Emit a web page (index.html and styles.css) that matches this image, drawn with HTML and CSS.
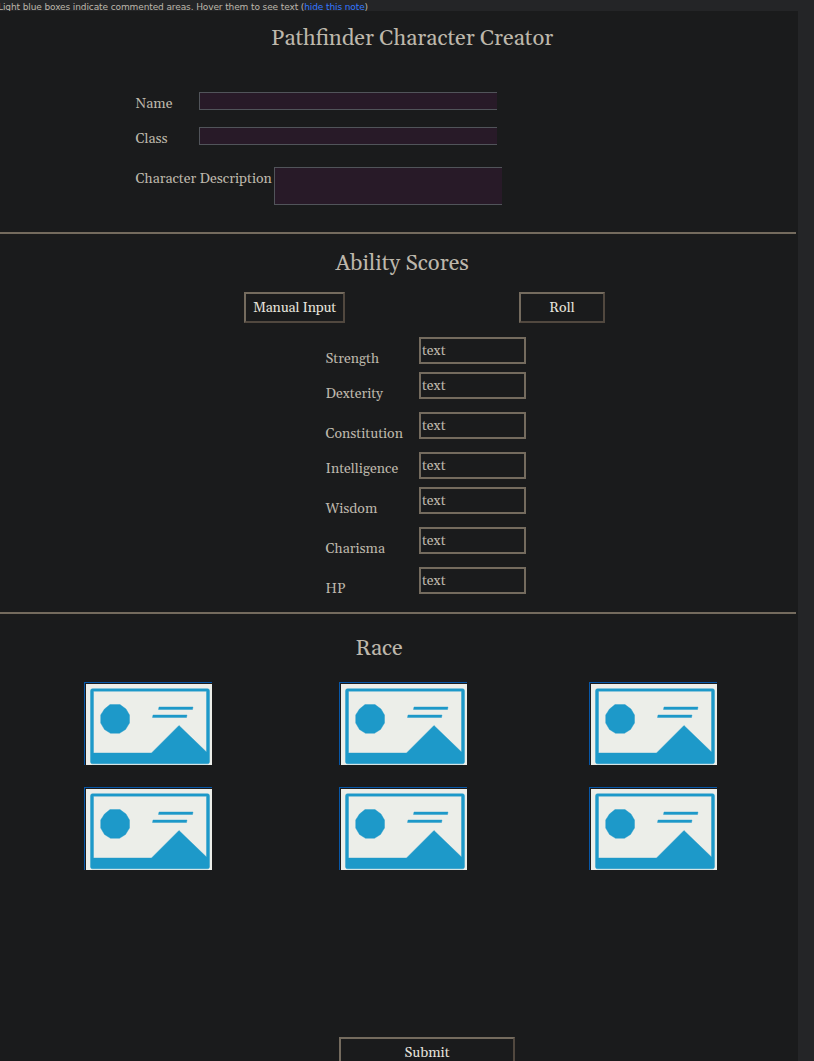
FILE: index.html
```
<!DOCTYPE html>
<html lang="en">
<head>
<meta charset="utf-8">
<title>Pathfinder Character Creator</title>
<link rel="stylesheet" href="styles.css">
</head>
<body>
<svg class="defs" aria-hidden="true">
  <symbol id="picture" viewBox="0 0 126 81">
    <g fill="#1d99c9" stroke="#1d99c9" stroke-opacity=".4" stroke-width="1">
      <path fill-rule="evenodd" d="M6.500 4.700H121.500Q123.500 4.700 123.500 6.700V78Q123.500 79.800 121.500 79.800H6.500Q4.500 79.800 4.500 78V6.700Q4.500 4.700 6.500 4.700ZM7.500 7.200V69H65.500L93 41.500L120.500 68V7.200Z"/>
      <path d="M24 20.600H34L40 25L43.500 31V39L39.500 45.500L33.500 49.300H24.500L18.500 45.500L14.700 39V31L18.500 25Z"/>
      <path d="M73 23H107L106.500 25.500H72.500ZM67 31H101L100.500 33.500H66.500Z"/>
    </g>
  </symbol>
</svg>
<div class="note"><p>Light blue boxes indicate commented areas. Hover them to see text (<a href="#">hide this note</a>)</p></div>
<main class="page">
  <section class="identity">
    <h1 class="title">Pathfinder Character Creator</h1>
    <label class="field name"><span>Name</span><input class="entry"></label>
    <label class="field class"><span>Class</span><input class="entry"></label>
    <label class="field description"><span>Character Description</span><textarea class="entry"></textarea></label>
  </section>
  <section class="abilities">
    <h2 class="title">Ability Scores</h2>
    <div class="actions"><button class="button manual">Manual Input</button><button class="button roll">Roll</button></div>
    <div class="scores">
      <div class="score"><span>Strength</span><div class="box">text</div></div>
      <div class="score tall"><span>Dexterity</span><div class="box">text</div></div>
      <div class="score tall"><span>Constitution</span><div class="box">text</div></div>
      <div class="score raised"><span>Intelligence</span><div class="box">text</div></div>
      <div class="score tall"><span>Wisdom</span><div class="box">text</div></div>
      <div class="score tall"><span>Charisma</span><div class="box">text</div></div>
      <div class="score"><span>HP</span><div class="box">text</div></div>
    </div>
  </section>
  <section class="races">
    <h2 class="title">Race</h2>
    <div class="gallery">
      <a class="race"><svg><use href="#picture"/></svg></a>
      <a class="race"><svg><use href="#picture"/></svg></a>
      <a class="race"><svg><use href="#picture"/></svg></a>
      <a class="race"><svg><use href="#picture"/></svg></a>
      <a class="race"><svg><use href="#picture"/></svg></a>
      <a class="race"><svg><use href="#picture"/></svg></a>
    </div>
    <button class="button submit">Submit</button>
  </section>
</main>
</body>
</html>
```
FILE: styles.css
```
* { box-sizing: border-box; }
body {
  margin: 0;
  height: 1061px;
  overflow: hidden;
  background: #242527;
  color: #bdb7ab;
  font: 14px/20px Georgia, Gelasio, "Liberation Serif", serif;
}
.defs { display: none; }
.note { height: 11px; overflow: hidden; font: 9px/14px "DejaVu Sans", sans-serif; letter-spacing: -0.11px; }
.note p { margin: 0 0 0 -2px; white-space: nowrap; }
.note a { color: #3478ff; text-decoration: none; }
.page { width: 798px; height: 1050px; background: #1a1b1c; overflow: hidden; }
.identity, .abilities { width: 796px; border-bottom: 2px solid #746b5e; }
.title { margin: 0; font-size: 22px; line-height: 30px; font-weight: 400; white-space: nowrap; }
.identity { height: 223px; padding-top: 13px; }
.identity .title { padding-left: 271px; }
.field { display: flex; padding-left: 135px; white-space: nowrap; }
.field span { width: 64px; padding: 2px 0 0 0.5px; }
.entry {
  width: 298px;
  height: 18px;
  margin: 0;
  padding: 0;
  border: 1px solid #51545a;
  border-right: 0;
  border-radius: 0;
  outline: 0;
  resize: none;
  background: #281a28;
  color: inherit;
}
.name { height: 35px; margin-top: 38px; }
.class { height: 40px; }
.description span { width: 139px; }
.description .entry { width: 228px; height: 38px; }
.abilities { height: 380px; padding-top: 15px; }
.abilities .title { padding-left: 335.5px; }
.actions { display: flex; gap: 174px; margin: 13px 0 14px; padding-left: 244px; }
.button {
  height: 31px;
  padding: 0;
  border: 2px solid;
  border-color: #746b5e #51483f #51483f #746b5e;
  background: #1a1b1c;
  color: #e6e3dd;
  font: inherit;
  white-space: nowrap;
}
.manual { width: 101px; letter-spacing: -0.2px; }
.roll { width: 86px; }
.scores { padding-left: 325px; }
.score { display: flex; height: 35px; }
.score.tall { height: 40px; }
.score span { width: 94px; padding: 12px 0 0 0.5px; }
.score.raised span { padding-top: 7px; }
.box { width: 107px; height: 27px; border: 2px solid #746b5e; padding-left: 1px; line-height: 24px; }
.races { padding-top: 20px; }
.races .title { padding-left: 355.5px; }
.gallery {
  display: grid;
  grid-template-columns: 255px 250px 128px;
  grid-auto-rows: 83px;
  row-gap: 22px;
  margin-top: 18px;
  padding-left: 84px;
}
.race { width: 128px; height: 83px; padding: 1px 0 0 1px; border: solid #0757a8; border-width: 1px 0 0 1px; }
.race svg { display: block; width: 126px; height: 81px; background: #eceee9; }
.submit { display: block; width: 176px; margin: 167px 0 0 339px; }
```
